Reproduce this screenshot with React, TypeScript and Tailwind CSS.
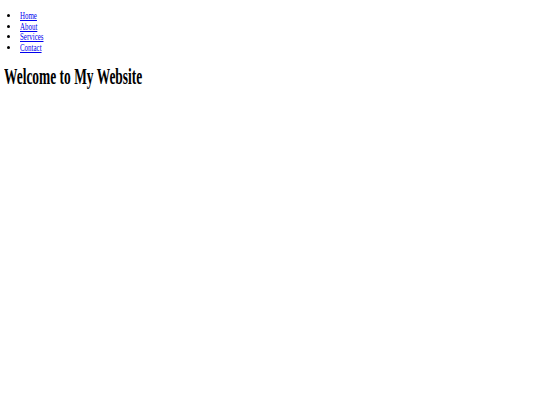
import React from 'react';

const links = ['Home', 'About', 'Services', 'Contact'];

const App: React.FC = () => {
  return (
    <div className="min-h-screen w-full bg-white text-black" style={{ fontFamily: '"Liberation Serif", "Times New Roman", serif' }}>
      {/* Nav list */}
      <ul className="list-disc pl-[20px] pt-[11px] text-[10.5px] leading-[10.7px]">
        {links.map(link => (
          <li key={link}>
            <a href="#" className="inline-block origin-left scale-x-[0.66] text-[#0000ee] underline">
              {link}
            </a>
          </li>
        ))}
      </ul>
      <h1 className="mt-[9px] pl-[3.5px] text-[24px] font-bold leading-[26px]">
        <span className="inline-block origin-left scale-x-[0.56]">Welcome to My Website</span>
      </h1>
    </div>
  );
};

export default App;
